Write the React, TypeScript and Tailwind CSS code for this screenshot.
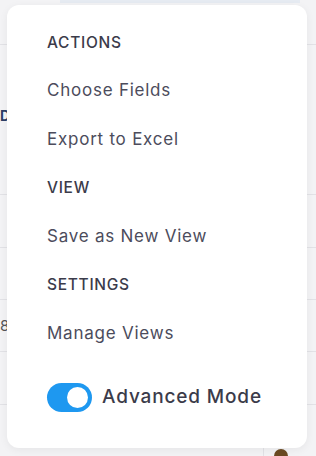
import React from 'react';

const rows = [
  { kind: 'header', label: 'ACTIONS' },
  { kind: 'item', label: 'Choose Fields' },
  { kind: 'item', label: 'Export to Excel' },
  { kind: 'header', label: 'VIEW' },
  { kind: 'item', label: 'Save as New View' },
  { kind: 'header', label: 'SETTINGS' },
  { kind: 'item', label: 'Manage Views' },
];

const App = () => {
  return (
    <div className="relative w-[316px] h-[456px] overflow-hidden bg-[#f3f3f5] font-['Inter',sans-serif]">
      {/* Page behind the menu */}
      <div className="flex flex-col">
        <div className="h-[3px] ml-[60px] mr-[16px] bg-[#e6ebf2]" />
        <div className="h-[42px] border-b border-[#e2e2e6]" />
        <div className="h-[150px] border-b border-[#e2e2e6] flex items-start pt-[64px]">
          <span className="text-[14px] font-bold text-[#2c3e66] leading-none">D</span>
        </div>
        <div className="h-[53px] border-b border-[#e2e2e6]" />
        <div className="h-[52px] border-b border-[#e2e2e6]" />
        <div className="h-[52px] border-b border-[#e2e2e6] flex items-center">
          <span className="text-[15px] text-[#555] leading-none">8</span>
        </div>
        <div className="h-[53px] border-b border-[#e2e2e6]" />
        <div className="flex-1 flex justify-end pr-[28px]">
          <div className="w-px h-[60px] bg-[#e2e2e6]" />
          <div className="ml-[10px] mt-[44px] w-[14px] h-[14px] rounded-full bg-[#6b4a22]" />
        </div>
      </div>

      {/* Dropdown menu */}
      <div className="absolute left-[7px] top-[5px] w-[300px] h-[443px] rounded-[12px] bg-white shadow-[0_2px_8px_rgba(0,0,0,0.06)] pl-[40px] pt-[13px]">
        {rows.map((r) =>
          r.kind === 'header' ? (
            <div key={r.label} className="h-[48.5px] flex items-center text-[15.5px] font-medium text-[#3b3b4a] tracking-[0.045em]">
              {r.label}
            </div>
          ) : (
            <div key={r.label} className="h-[48.5px] flex items-center text-[17px] text-[#4c4c5c] tracking-[0.045em]">
              {r.label}
            </div>
          )
        )}
        <div className="mt-[16px] h-[48px] flex items-center gap-[10px]">
          <div className="w-[45px] h-[29px] rounded-full bg-[#1e98f0] flex items-center justify-end pr-[4px]">
            <div className="w-[21px] h-[21px] rounded-full bg-white" />
          </div>
          <span className="text-[19px] font-medium text-[#3b3b4a] tracking-[0.045em]">Advanced Mode</span>
        </div>
      </div>
    </div>
  );
};

export default App;
